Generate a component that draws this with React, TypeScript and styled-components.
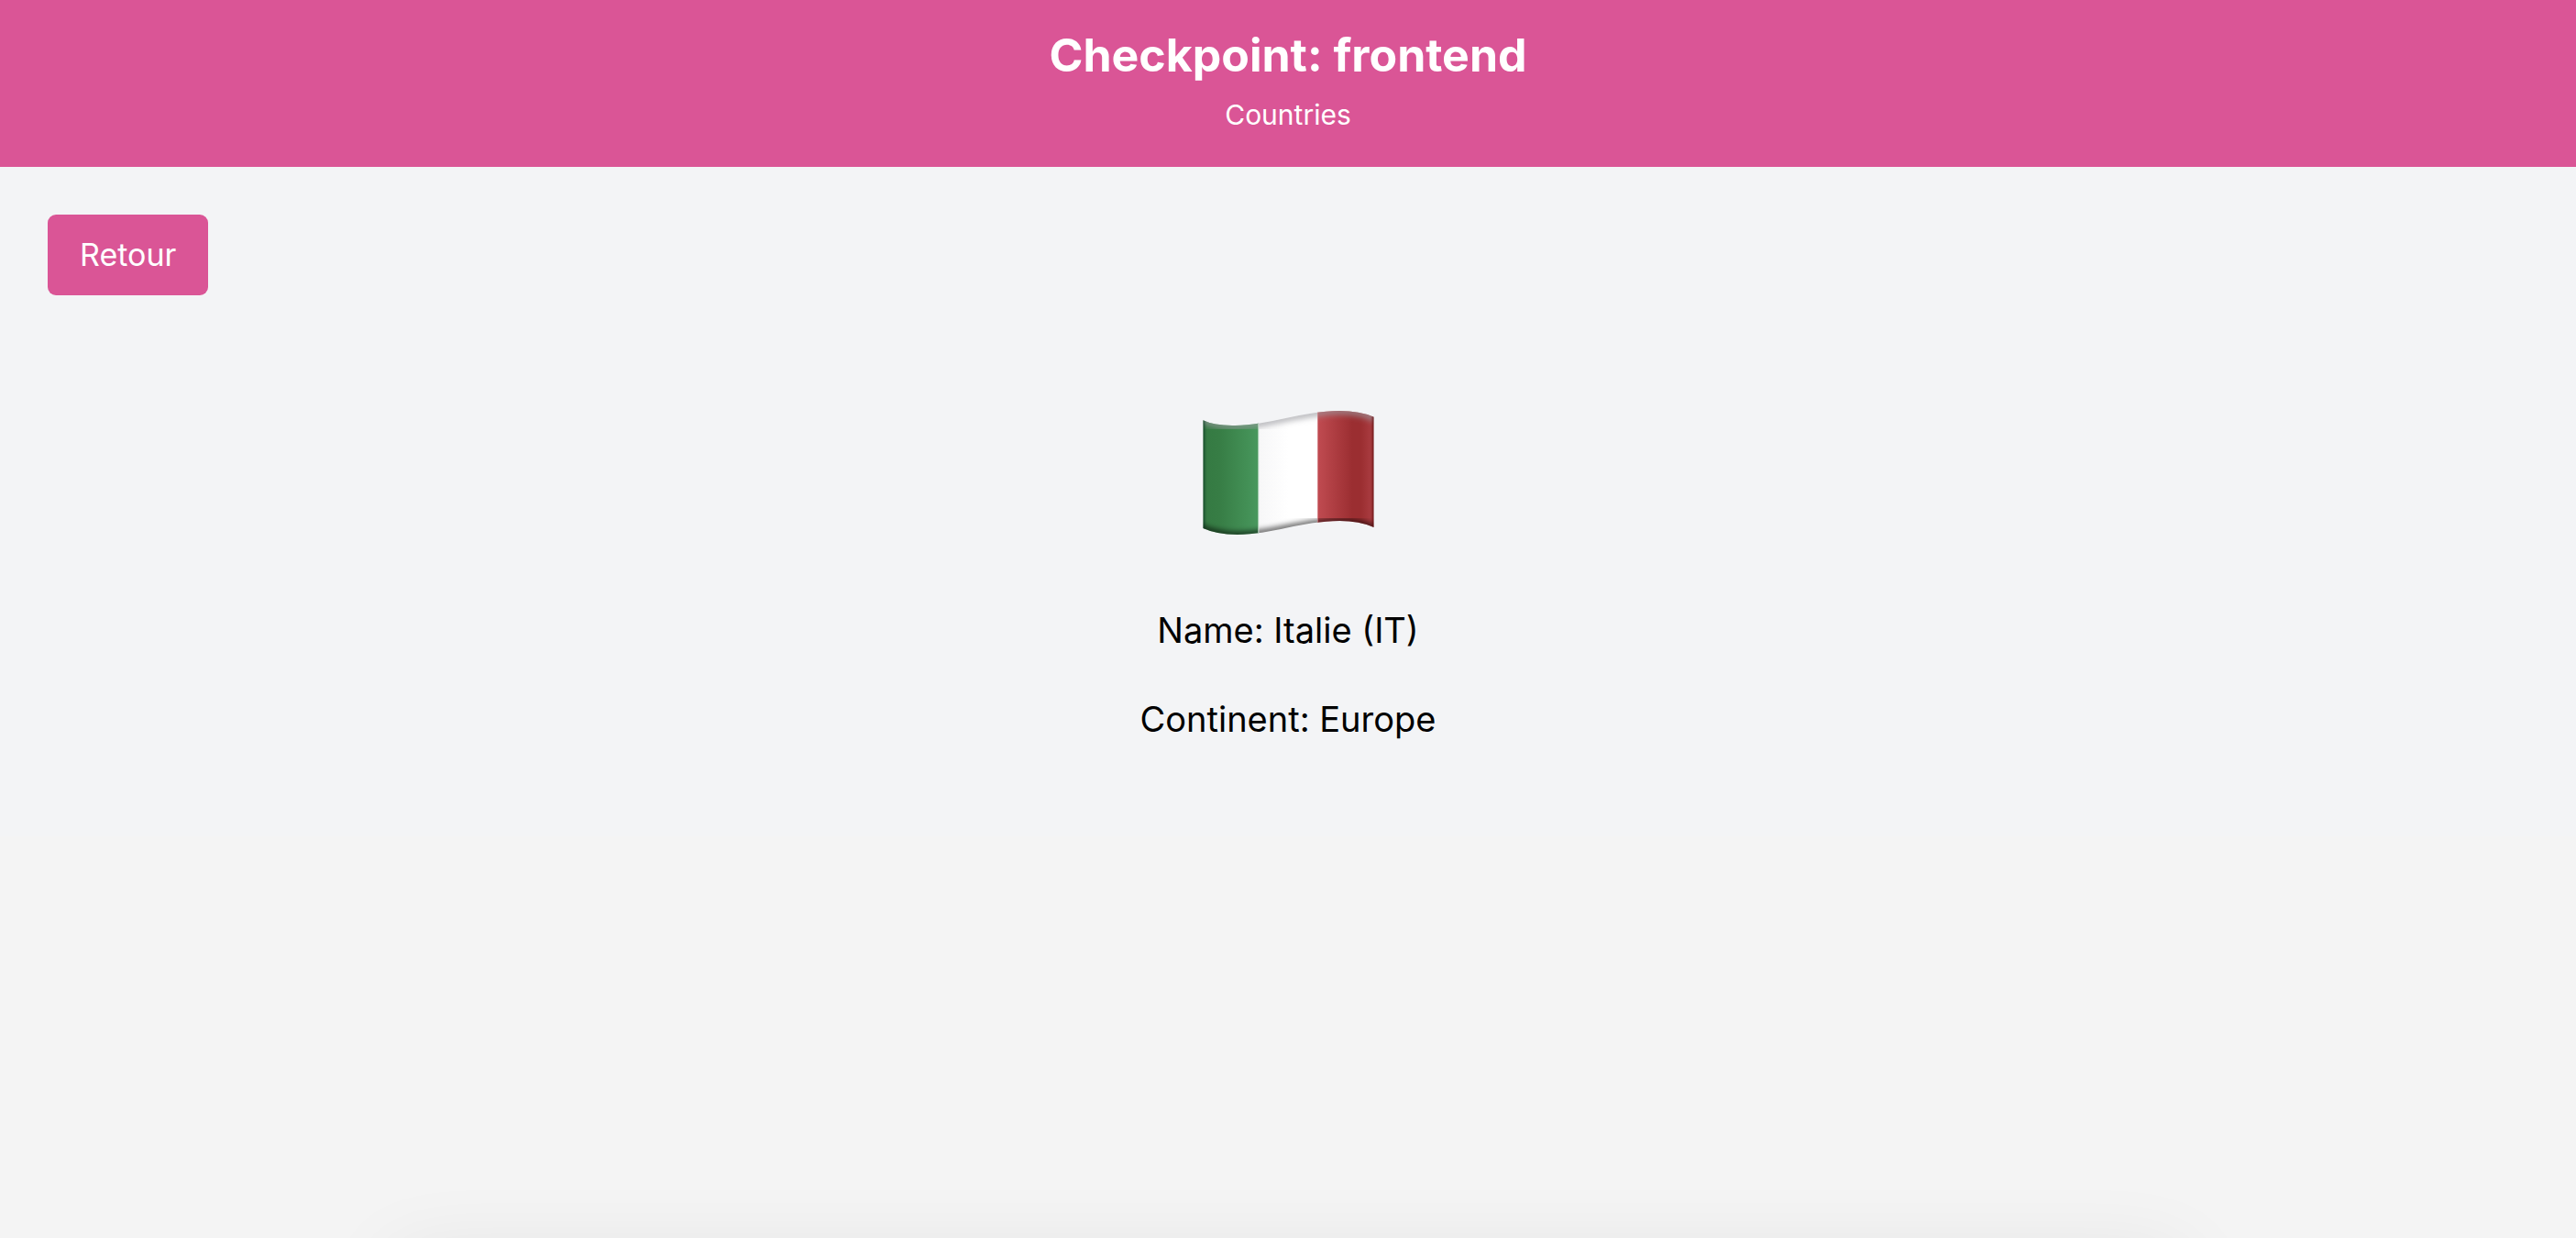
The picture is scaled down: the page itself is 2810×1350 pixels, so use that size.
import React from "react";
import styled, { createGlobalStyle } from "styled-components";

const GlobalStyle = createGlobalStyle`
  *, *::before, *::after { box-sizing: border-box; }
  body {
    margin: 0;
    background: #f4f4f4;
    color: #000;
    font-family: Inter, "Liberation Sans", sans-serif;
  }
`;

const Page = styled.div`
  min-height: 100vh;
  overflow-x: hidden;
`;

const Header = styled.header`
  display: flex;
  flex-direction: column;
  align-items: center;
  gap: 8px;
  padding: 28px 32px 32px;
  background: #da5596;
  color: #fff;
  text-align: center;
`;

const Title = styled.h1`
  margin: 0;
  font-size: 50px;
  font-weight: 700;
  line-height: 64px;
`;

const Subtitle = styled.p`
  margin: 0;
  font-size: 30px;
  line-height: 50px;
`;

const Main = styled.main`
  display: flex;
  flex-direction: column;
  padding: 52px 52px 104px;
  background: #f3f4f6;
`;

const BackButton = styled.button`
  align-self: flex-start;
  padding: 20px 35px;
  border: 0;
  border-radius: 9px;
  background: #da5596;
  color: #fff;
  font-family: inherit;
  font-size: 34px;
  line-height: 48px;
  cursor: pointer;
`;

const Country = styled.section`
  display: flex;
  flex-direction: column;
  align-items: center;
  gap: 49px;
  padding-top: 126px;
`;

const Flag = styled.svg`
  display: block;
  width: 187px;
  height: 135px;
  margin: 0 0 31px;
`;

const Detail = styled.p`
  margin: 0;
  font-size: 38px;
  line-height: 48px;
`;

const DockShade = styled.div`
  position: fixed;
  top: 100%;
  left: 15%;
  right: 15%;
  height: 60px;
  border-radius: 40px;
  box-shadow: 0 22px 90px rgba(0, 0, 0, 0.09);
  pointer-events: none;
`;

const OUTLINE =
  "M103 115 Q140 133 205 132 C310 133 430 84 550 84 Q615 84 662 104 V465 Q615 444 550 444 C430 444 325 489 215 489 Q145 488 103 468 Z";

function ItalianFlag() {
  return (
    <Flag viewBox="102 84 561 405" role="img" aria-label="Italie">
      <defs>
        <clipPath id="cloth">
          <path d={OUTLINE} />
        </clipPath>
        <linearGradient id="green">
          <stop offset="0" stopColor="#347942" />
          <stop offset="0.3" stopColor="#377d45" />
          <stop offset="1" stopColor="#48985d" />
        </linearGradient>
        <linearGradient id="white">
          <stop offset="0" stopColor="#f7f7f8" />
          <stop offset="0.5" stopColor="#fff" />
          <stop offset="1" stopColor="#fff" />
        </linearGradient>
        <linearGradient id="red">
          <stop offset="0" stopColor="#c04b51" />
          <stop offset="0.6" stopColor="#9b2e31" />
          <stop offset="0.75" stopColor="#9b2e31" />
          <stop offset="1" stopColor="#b04247" />
        </linearGradient>
        <filter id="soft" x="-10%" y="-20%" width="120%" height="140%">
          <feGaussianBlur stdDeviation="9" />
        </filter>
        <filter id="edge" x="-300%" y="-10%" width="700%" height="120%">
          <feGaussianBlur stdDeviation="5" />
        </filter>
      </defs>
      <g clipPath="url(#cloth)">
        <rect x="100" y="80" width="185" height="420" fill="url(#green)" />
        <rect x="285" y="80" width="193" height="420" fill="url(#white)" />
        <rect x="478" y="80" width="190" height="420" fill="url(#red)" />
        <path
          d="M95 110 Q140 133 205 132 C310 133 430 84 550 84 Q615 84 670 108"
          fill="none" stroke="#9a9aa0" strokeOpacity="0.7" strokeWidth="24" filter="url(#soft)"
        />
        <path
          d="M95 464 Q145 488 215 489 C325 489 430 444 550 444 Q615 444 670 469"
          fill="none" stroke="#000" strokeOpacity="0.8" strokeWidth="15" filter="url(#soft)"
        />
        <rect x="97" y="100" width="9" height="400" fill="#052c12" filter="url(#edge)" />
        <rect x="659" y="80" width="9" height="400" fill="#4a0c10" filter="url(#edge)" />
        <rect x="283" y="80" width="3" height="420" fill="#cfe5d5" />
        <rect x="477" y="80" width="2" height="420" fill="#d58287" />
      </g>
    </Flag>
  );
}

interface CountryInfo {
  name: string;
  code: string;
  continent: string;
}

const country: CountryInfo = { name: "Italie", code: "IT", continent: "Europe" };

export default function App() {
  return (
    <Page>
      <GlobalStyle />
      <Header>
        <Title>Checkpoint: frontend</Title>
        <Subtitle>Countries</Subtitle>
      </Header>
      <Main>
        <BackButton type="button">Retour</BackButton>
        <Country>
          <ItalianFlag />
          <Detail>{`Name: ${country.name} (${country.code})`}</Detail>
          <Detail>{`Continent: ${country.continent}`}</Detail>
        </Country>
      </Main>
      <DockShade />
    </Page>
  );
}
